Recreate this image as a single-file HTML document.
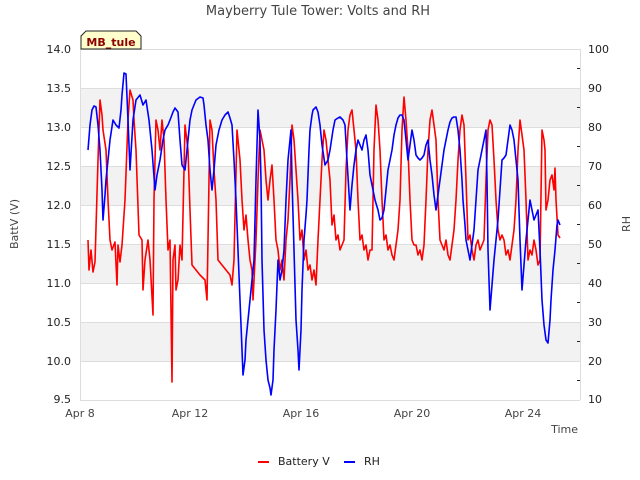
<!DOCTYPE html>
<html><head><meta charset="utf-8"><style>
html,body{margin:0;padding:0;background:#fff;width:640px;height:480px;overflow:hidden}
svg{display:block;font-family:"DejaVu Sans","Liberation Sans",sans-serif}
</style></head><body>
<svg width="640" height="480" viewBox="0 0 640 480">
<text x="318" y="15" font-size="13" fill="#444" text-anchor="middle">Mayberry Tule Tower: Volts and RH</text>
<rect x="80" y="88" width="500" height="39" fill="#f2f2f2"/>
<rect x="80" y="166" width="500" height="39" fill="#f2f2f2"/>
<rect x="80" y="244" width="500" height="39" fill="#f2f2f2"/>
<rect x="80" y="322" width="500" height="39" fill="#f2f2f2"/>
<g stroke="#ddd" stroke-width="1">
<line x1="80" y1="49.5" x2="580" y2="49.5"/><line x1="80" y1="88.5" x2="580" y2="88.5"/><line x1="80" y1="127.5" x2="580" y2="127.5"/><line x1="80" y1="166.5" x2="580" y2="166.5"/><line x1="80" y1="205.5" x2="580" y2="205.5"/><line x1="80" y1="244.5" x2="580" y2="244.5"/><line x1="80" y1="283.5" x2="580" y2="283.5"/><line x1="80" y1="322.5" x2="580" y2="322.5"/><line x1="80" y1="361.5" x2="580" y2="361.5"/>
<line x1="80.5" y1="49" x2="80.5" y2="400"/><line x1="580.5" y1="49" x2="580.5" y2="400"/><line x1="80" y1="400.5" x2="580" y2="400.5"/>
</g>
<g font-size="11" fill="#222" text-anchor="end">
<text x="71" y="53">14.0</text><text x="71" y="92">13.5</text><text x="71" y="131">13.0</text><text x="71" y="170">12.5</text><text x="71" y="209">12.0</text><text x="71" y="248">11.5</text><text x="71" y="287">11.0</text><text x="71" y="326">10.5</text><text x="71" y="365">10.0</text><text x="71" y="403">9.5</text>
</g>
<g font-size="11" fill="#222">
<text x="588" y="53">100</text><text x="588" y="92">90</text><text x="588" y="131">80</text><text x="588" y="170">70</text><text x="588" y="209">60</text><text x="588" y="248">50</text><text x="588" y="287">40</text><text x="588" y="326">30</text><text x="588" y="365">20</text><text x="588" y="403">10</text>
</g>
<g stroke="#222" stroke-width="1">
<line x1="577" y1="68.5" x2="580" y2="68.5"/><line x1="577" y1="107.5" x2="580" y2="107.5"/><line x1="577" y1="146.5" x2="580" y2="146.5"/><line x1="577" y1="185.5" x2="580" y2="185.5"/><line x1="577" y1="224.5" x2="580" y2="224.5"/><line x1="577" y1="263.5" x2="580" y2="263.5"/><line x1="577" y1="302.5" x2="580" y2="302.5"/><line x1="577" y1="341.5" x2="580" y2="341.5"/><line x1="577" y1="380.5" x2="580" y2="380.5"/>
</g>
<g font-size="11" fill="#444" text-anchor="middle">
<text x="80" y="417">Apr 8</text><text x="190" y="417">Apr 12</text><text x="301" y="417">Apr 16</text><text x="412" y="417">Apr 20</text><text x="523" y="417">Apr 24</text>
</g>
<text x="578" y="433" font-size="11" fill="#444" text-anchor="end">Time</text>
<text transform="translate(18,224) rotate(-90)" font-size="11" fill="#444" text-anchor="middle">BattV (V)</text>
<text transform="translate(630,224) rotate(-90)" font-size="11" fill="#444" text-anchor="middle">RH</text>
<polyline fill="none" stroke="#ff0000" stroke-width="1.6" stroke-linejoin="round" points="88,240 89,270 91,250 93,272 95,262 98,160 100,100 102,115 103,130 106,150 108,200 110,240 112,250 115,242 117,285 118,245 120,262 122,245 125,200 128,120 130,90 133,100 134,120 136,150 139,235 142,240 143,290 145,260 148,240 150,260 153,315 154,200 156,120 158,130 160,150 162,120 164,140 166,200 168,250 170,240 172,382 173,260 175,245 176,290 178,280 180,245 182,260 185,125 188,150 190,210 192,265 196,270 200,275 205,280 207,300 210,120 212,130 214,170 216,200 218,260 222,265 226,270 230,275 232,285 234,260 237,130 240,160 242,200 244,230 246,215 248,240 250,260 252,270 253,300 256,240 258,180 260,130 262,140 264,150 266,180 268,200 270,180 272,165 274,200 276,240 278,250 280,270 282,260 284,280 286,240 288,220 290,180 292,125 294,140 296,170 298,200 300,240 302,230 304,260 306,250 308,270 310,265 312,280 314,270 316,285 318,240 320,200 322,160 324,130 326,140 328,160 330,180 332,225 334,215 336,240 338,235 340,250 342,245 344,240 346,170 348,130 350,115 352,110 354,130 356,150 358,200 360,240 362,235 364,250 366,245 368,260 370,250 372,250 374,150 376,105 378,120 380,150 382,200 384,240 386,235 388,250 390,245 392,255 394,260 396,245 398,230 400,200 402,130 404,97 406,120 408,150 410,200 412,240 414,245 416,245 418,255 420,250 422,260 424,245 426,200 428,150 430,120 432,110 434,125 436,140 438,200 440,240 442,245 444,250 446,240 448,255 450,260 452,245 454,230 456,200 458,160 460,130 462,115 464,125 466,180 468,240 470,235 472,250 474,260 476,245 478,240 480,250 482,245 484,240 486,180 488,130 490,120 492,125 494,160 496,200 498,230 500,240 502,235 504,240 506,255 508,250 510,260 512,245 514,230 516,200 518,150 520,120 522,135 524,150 526,200 528,260 530,250 532,255 534,240 536,250 538,265 540,260 542,130 544,140 545,150 546,210 548,200 550,180 552,175 554,190 555,168 556,200 558,235 560,238"/>
<polyline fill="none" stroke="#0000ff" stroke-width="1.6" stroke-linejoin="round" points="88,150 90,125 92,110 94,106 96,107 98,125 100,150 102,190 103,220 105,195 106,180 108,160 110,140 113,120 116,125 119,128 121,110 122,95 124,73 126,74 128,120 130,170 133,120 136,100 140,95 143,105 146,100 149,120 152,150 155,190 157,175 160,160 163,140 165,130 168,125 170,120 173,112 175,108 178,112 180,140 182,165 185,170 188,140 190,120 192,110 196,100 200,97 203,98 204,105 206,125 208,140 210,170 212,190 214,170 216,145 219,130 222,120 225,115 228,112 230,118 232,125 234,160 236,200 238,250 240,300 242,350 243,375 245,360 246,340 248,320 250,300 252,280 254,260 256,180 258,110 260,140 261,180 262,260 264,330 266,360 268,380 270,388 271,395 273,380 274,350 276,310 278,260 280,280 282,270 284,250 286,200 288,160 290,140 291,130 292,180 294,250 296,320 298,350 299,370 301,330 302,290 304,240 306,215 307,200 309,150 310,130 312,115 313,110 316,107 318,112 320,125 322,145 325,165 328,160 330,150 333,130 335,120 338,118 340,117 343,120 345,125 347,160 350,210 352,185 354,165 356,150 358,140 360,145 362,150 364,140 366,135 368,150 370,175 372,185 375,200 378,210 380,220 382,218 384,210 386,190 388,170 390,160 392,150 394,135 396,125 398,118 400,115 402,115 404,120 406,140 408,160 410,145 412,130 414,140 416,155 418,158 420,160 422,158 424,155 426,145 428,140 430,160 432,175 434,195 436,210 438,195 440,180 442,165 444,150 446,140 448,130 450,122 452,118 454,117 456,117 458,130 460,150 462,180 463,200 465,225 466,240 468,250 470,260 472,245 474,230 476,200 478,170 480,160 482,150 484,140 486,130 487,180 488,250 490,310 492,285 494,260 496,240 498,220 500,190 502,160 504,158 506,155 508,140 510,125 512,130 514,140 516,160 518,180 520,240 522,290 524,265 526,240 528,220 530,200 532,210 534,220 536,215 538,210 540,250 542,300 544,325 546,340 548,343 550,320 551,300 553,270 555,250 557,225 558,220 560,225"/>
<path d="M81 49 L81 36 L86 31 L136 31 L141 36 L141 49 Z" fill="#ffffcc" stroke="#222" stroke-width="1"/>
<text x="111" y="46" font-size="11" font-weight="bold" fill="#8b0000" text-anchor="middle">MB_tule</text>
<line x1="258" y1="462" x2="269" y2="462" stroke="#ff0000" stroke-width="2"/>
<text x="278" y="465" font-size="11" fill="#222">Battery V</text>
<line x1="344" y1="462" x2="355" y2="462" stroke="#0000ff" stroke-width="2"/>
<text x="364" y="465" font-size="11" fill="#222">RH</text>
</svg>
</body></html>
